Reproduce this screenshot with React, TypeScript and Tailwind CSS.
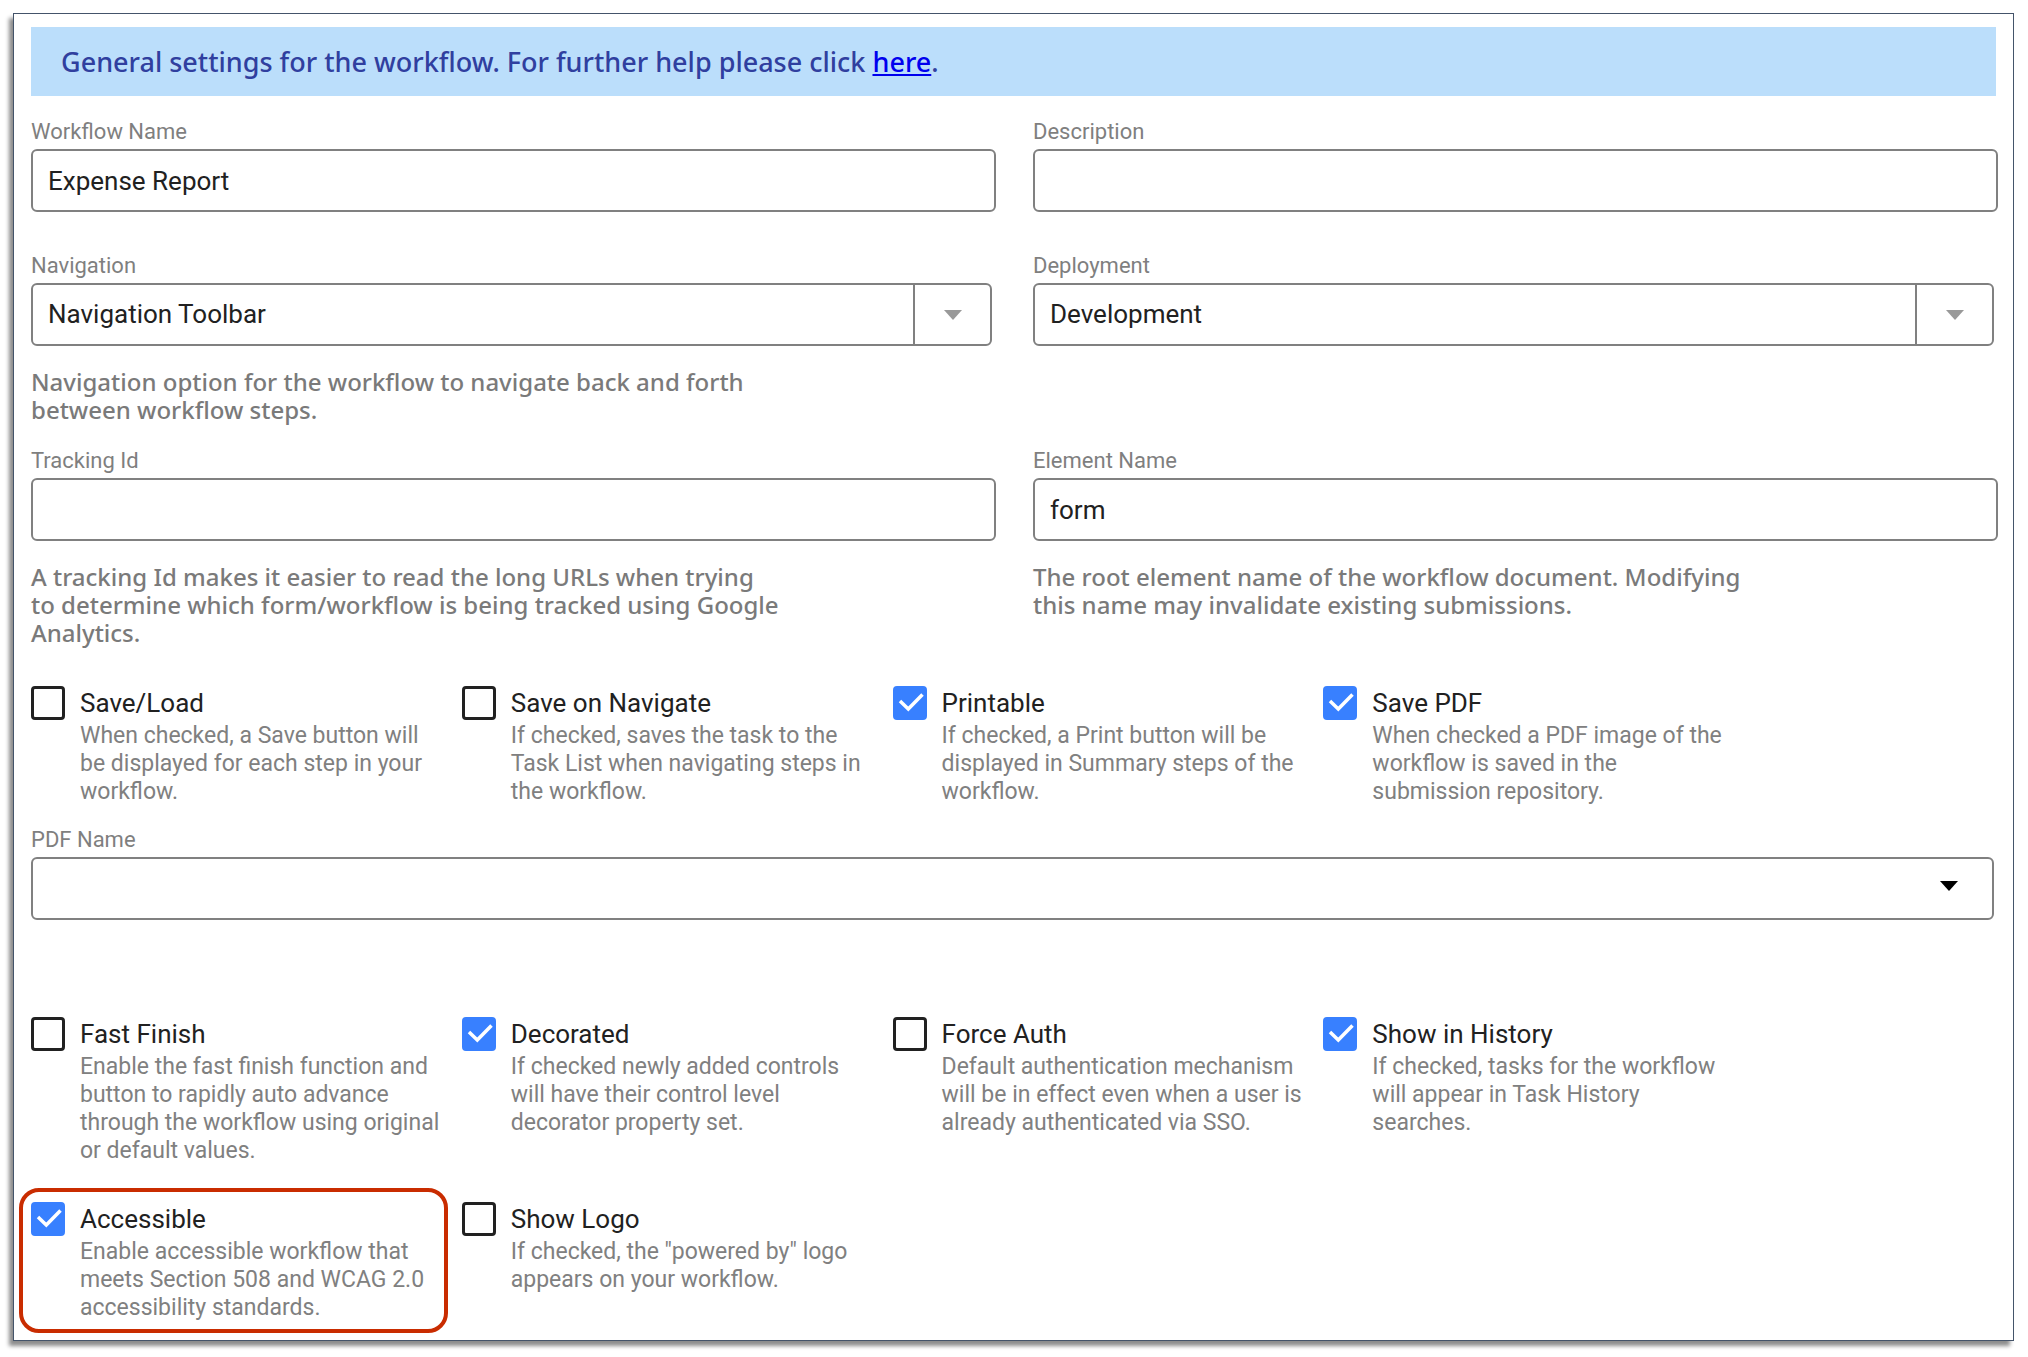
import { useState } from "react";

type Option = {
  id: string;
  label: string;
  help: string;
  checked?: boolean;
  highlighted?: boolean;
};

const outputOptions: Option[] = [
  {
    id: "save-load",
    label: "Save/Load",
    help: "When checked, a Save button will\nbe displayed for each step in your\nworkflow."
  },
  {
    id: "save-on-navigate",
    label: "Save on Navigate",
    help: "If checked, saves the task to the\nTask List when navigating steps in\nthe workflow."
  },
  {
    id: "printable",
    label: "Printable",
    help: "If checked, a Print button will be\ndisplayed in Summary steps of the\nworkflow.",
    checked: true
  },
  {
    id: "save-pdf",
    label: "Save PDF",
    help: "When checked a PDF image of the\nworkflow is saved in the\nsubmission repository.",
    checked: true
  }
];

const behaviorOptions: Option[] = [
  {
    id: "fast-finish",
    label: "Fast Finish",
    help: "Enable the fast finish function and\nbutton to rapidly auto advance\nthrough the workflow using original\nor default values."
  },
  {
    id: "decorated",
    label: "Decorated",
    help: "If checked newly added controls\nwill have their control level\ndecorator property set.",
    checked: true
  },
  {
    id: "force-auth",
    label: "Force Auth",
    help: "Default authentication mechanism\nwill be in effect even when a user is\nalready authenticated via SSO."
  },
  {
    id: "show-in-history",
    label: "Show in History",
    help: "If checked, tasks for the workflow\nwill appear in Task History\nsearches.",
    checked: true
  },
  {
    id: "accessible",
    label: "Accessible",
    help: "Enable accessible workflow that\nmeets Section 508 and WCAG 2.0\naccessibility standards.",
    checked: true,
    highlighted: true
  },
  {
    id: "show-logo",
    label: "Show Logo",
    help: "If checked, the \"powered by\" logo\nappears on your workflow."
  }
];

const controlClass =
  "block h-[63px] w-full rounded-md border-2 border-[#808080] bg-white px-[15px] text-[26px] text-[#212121] outline-none focus:border-[#3880ff]";

function FieldLabel({ id, children }: { id: string; children: string }) {
  return (
    <label htmlFor={id} className="mb-[3px] block text-[22px] leading-7 text-[#7f7f7f]">
      {children}
    </label>
  );
}

function HelpText({ children }: { children: string }) {
  return (
    <p className="mt-[22px] font-['Noto_Sans',sans-serif] text-[24px] leading-7 font-medium whitespace-pre-line text-[#7a7a7a]">
      {children}
    </p>
  );
}

type TextFieldProps = {
  id: string;
  label: string;
  initial?: string;
  help?: string;
};

function TextField({ id, label, initial = "", help }: TextFieldProps) {
  const [value, setValue] = useState(initial);

  return (
    <div>
      <FieldLabel id={id}>{label}</FieldLabel>
      <input id={id} type="text" value={value} onChange={(event) => setValue(event.target.value)} className={controlClass} />
      {help ? <HelpText>{help}</HelpText> : null}
    </div>
  );
}

type SelectFieldProps = {
  id: string;
  label: string;
  options: string[];
  help?: string;
};

function SelectField({ id, label, options, help }: SelectFieldProps) {
  return (
    <div className="mr-1">
      <FieldLabel id={id}>{label}</FieldLabel>
      <div className="relative">
        <select id={id} className={`${controlClass} appearance-none`}>
          {options.map((option) => (
            <option key={option}>{option}</option>
          ))}
        </select>
        <span className="pointer-events-none absolute inset-y-0 right-0 flex w-[79px] items-center justify-center border-l-2 border-[#808080] pr-0.5">
          <svg width="18" height="10" viewBox="0 0 18 10" aria-hidden="true">
            <path d="M0 0h18L9 10z" fill="#999" />
          </svg>
        </span>
      </div>
      {help ? <HelpText>{help}</HelpText> : null}
    </div>
  );
}

function OptionCheckbox({ option }: { option: Option }) {
  const [checked, setChecked] = useState(!!option.checked);

  return (
    <div className="relative flex items-start gap-[15px]">
      {option.highlighted ? (
        <span className="pointer-events-none absolute -top-3.5 right-3 -bottom-[11px] -left-3 rounded-[20px] border-4 border-[#c92c00]" />
      ) : null}
      <span className="relative block size-[34px] shrink-0">
        <input
          id={option.id}
          type="checkbox"
          checked={checked}
          onChange={(event) => setChecked(event.target.checked)}
          aria-describedby={`${option.id}-help`}
          className="peer block size-[34px] appearance-none rounded-sm border-[3px] border-[#212121] bg-white checked:border-[#3880ff] checked:bg-[#3880ff]"
        />
        <svg
          viewBox="0 0 34 34"
          className="pointer-events-none absolute inset-0 hidden size-[34px] peer-checked:block"
          aria-hidden="true"
        >
          <path d="M7 15l8.300 8L29.500 8.500" fill="none" stroke="#fff" strokeWidth="3.500" />
        </svg>
      </span>
      <div>
        <label htmlFor={option.id} className="block text-[26px] leading-[34px] text-[#212121]">
          {option.label}
        </label>
        <p id={`${option.id}-help`} className="mt-0.5 text-[23px] leading-7 whitespace-pre-line text-[#808080]">
          {option.help}
        </p>
      </div>
    </div>
  );
}

function OptionGrid({ options }: { options: Option[] }) {
  return (
    <div className="grid w-7/8 grid-cols-4 gap-x-0.5 gap-y-[37px]">
      {options.map((option) => (
        <OptionCheckbox key={option.id} option={option} />
      ))}
    </div>
  );
}

export default function App() {
  return (
    <main className="bg-white pt-[13px] pr-3.5 pb-4 pl-[13px] font-[Roboto,sans-serif]">
      <form
        className="border border-[#44546a] bg-white pt-[13px] pr-[15px] pb-[18px] pl-[17px] shadow-[-4px_5px_4px_0px_rgba(0,0,0,0.45)]"
        onSubmit={(event) => event.preventDefault()}
      >
        <p className="mr-0.5 bg-[#bbdefb] py-4 pl-[30px] font-['Noto_Sans',sans-serif] text-[27px] leading-[37px] font-medium text-[#303f9f]">
          General settings for the workflow. For further help please click{" "}
          <a href="#help" className="text-[#0000ee] underline">
            here
          </a>
          .
        </p>

        <div className="mt-[22px] grid grid-cols-2 gap-x-[37px] gap-y-10">
          <TextField id="workflow-name" label="Workflow Name" initial="Expense Report" />
          <TextField id="description" label="Description" />
          <SelectField
            id="navigation"
            label="Navigation"
            options={["Navigation Toolbar", "None"]}
            help={"Navigation option for the workflow to navigate back and forth\nbetween workflow steps."}
          />
          <SelectField id="deployment" label="Deployment" options={["Development", "Production"]} />
        </div>

        <div className="mt-[23px] grid grid-cols-2 gap-x-[37px]">
          <TextField
            id="tracking-id"
            label="Tracking Id"
            help={"A tracking Id makes it easier to read the long URLs when trying\nto determine which form/workflow is being tracked using Google\nAnalytics."}
          />
          <TextField
            id="element-name"
            label="Element Name"
            initial="form"
            help={"The root element name of the workflow document. Modifying\nthis name may invalidate existing submissions."}
          />
        </div>

        <div className="mt-[39px]">
          <OptionGrid options={outputOptions} />
        </div>

        <div className="mt-5 mr-1">
          <FieldLabel id="pdf-name">PDF Name</FieldLabel>
          <div className="relative">
            <select id="pdf-name" className={`${controlClass} appearance-none`}>
              <option></option>
            </select>
            <svg
              width="18"
              height="10"
              viewBox="0 0 18 10"
              className="pointer-events-none absolute top-6 right-9"
              aria-hidden="true"
            >
              <path d="M0 0h18L9 10z" fill="#000" />
            </svg>
          </div>
        </div>

        <div className="mt-[97px]">
          <OptionGrid options={behaviorOptions} />
        </div>
      </form>
    </main>
  );
}
